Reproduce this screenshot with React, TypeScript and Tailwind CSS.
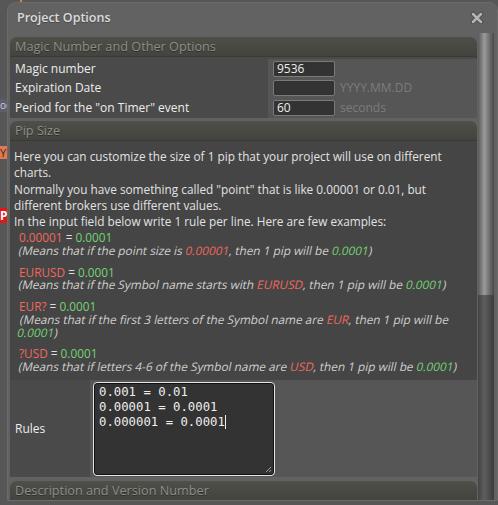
const R = ({ children }: { children: React.ReactNode }) => (
  <span className="text-[#f0685e]">{children}</span>
);
const G = ({ children }: { children: React.ReactNode }) => (
  <span className="text-[#74d474]">{children}</span>
);

const SectionHeader = ({ title }: { title: string }) => (
  <div className="h-[20px] rounded-t-[6px] bg-gradient-to-b from-[#4f4f49] to-[#44443e] border-b border-[#3a3a35] px-[5px] flex items-center text-[12.7px] text-[#8e8e89] [text-shadow:0_1px_0_#2f2f2b]">
    {title}
  </div>
);

const FieldRow = ({
  label,
  value,
  hint,
}: {
  label: string;
  value: string;
  hint?: string;
}) => (
  <div className="flex h-[19.5px]">
    <div className="w-[258px] bg-[#4a4a4a] px-[5px] flex items-center text-[12px] text-[#ececec]">
      {label}
    </div>
    <div className="flex-1 bg-[#565656] flex items-center pl-[5px] gap-[5px]">
      <div className="w-[62px] h-[16px] bg-[#333333] border border-[#7a7a7a] rounded-[2px] px-[3px] flex items-center text-[12px] text-[#eeeeee] leading-none">
        {value}
      </div>
      {hint && <span className="text-[12px] text-[#7c7c7c]">{hint}</span>}
    </div>
  </div>
);

// the app slants the regular face, so the notes keep regular widths
const Example = ({
  rule,
  desc,
  first,
}: {
  rule: React.ReactNode;
  desc: React.ReactNode;
  first?: boolean;
}) => (
  <div className={`pl-[5px] leading-[12.5px] ${first ? "mt-[2px]" : "mt-[9.5px]"}`}>
    <div className="text-[#dddddd]">{rule}</div>
    <div className="text-[#cfcfcf] -skew-x-12">{desc}</div>
  </div>
);

export default function App() {
  return (
    <div
      className="relative w-[498px] h-[505px] overflow-hidden bg-[#575757]"
      style={{ fontFamily: '"Open Sans", "Liberation Sans", sans-serif' }}
    >
      {/* bits of the window behind the dialog */}
      <div className="absolute left-[20px] top-0 w-[2px] h-[3px] bg-[#e0803a]" />
      <div className="absolute left-0 top-[99px] w-[7px] h-[13px] bg-[#5d5d6e] text-[10px] leading-[13px] text-[#cfcfd8] overflow-hidden">
        oc
      </div>
      <div className="absolute left-0 top-[146px] w-[7px] h-[13px] bg-[#e07850] text-[11px] leading-[13px] text-[#3a2a20] overflow-hidden">
        Y
      </div>
      <div className="absolute left-0 top-[208px] w-[7px] h-[15px] bg-[#e01818] text-[12px] font-bold leading-[15px] text-white overflow-hidden">
        P
      </div>

      <div className="absolute left-[7px] top-[2px] w-[491px] h-[499px] bg-[#626262] border border-[#6b6b6b] rounded-t-[9px] flex flex-col overflow-hidden">
        <div className="h-[30px] shrink-0 flex items-center justify-between pl-[9px] pr-[13px]">
          <span className="text-[12.5px] font-semibold text-[#dcdcdc] [text-shadow:0_1px_0_#4a4a4a]">
            Project Options
          </span>
          <svg width="14" height="14" viewBox="0 0 14 14">
            <path
              d="M3 3 L11 11 M11 3 L3 11"
              stroke="#4d4d4d"
              strokeWidth="4.5"
              strokeLinecap="round"
            />
            <path
              d="M3 3 L11 11 M11 3 L3 11"
              stroke="#b4b4b4"
              strokeWidth="2.5"
              strokeLinecap="round"
            />
          </svg>
        </div>

        <div className="flex flex-1 min-h-0">
          <div className="w-[467px] ml-[2px] pt-[4px] flex flex-col gap-[3.5px] overflow-hidden">
            <div className="shrink-0 rounded-t-[6px] overflow-hidden">
              <SectionHeader title="Magic Number and Other Options" />
              <div className="pt-[2px] bg-[#4a4a4a]">
                <FieldRow label="Magic number" value="9536" />
                <FieldRow label="Expiration Date" value="" hint="YYYY.MM.DD" />
                <FieldRow
                  label={'Period for the "on Timer" event'}
                  value="60"
                  hint="seconds"
                />
              </div>
            </div>

            <div className="shrink-0 rounded-t-[6px] overflow-hidden">
              <SectionHeader title="Pip Size" />
              <div className="bg-[#454545] pt-[7px] pb-[8px] px-[4px] text-[11.8px] text-[#e2e2e2]">
                <div className="leading-[16.25px]">
                  Here you can customize the size of 1 pip that your project will use on
                  different charts.
                  <br />
                  Normally you have something called "point" that is like 0.00001 or 0.01,
                  but different brokers use different values.
                  <br />
                  In the input field below write 1 rule per line. Here are few examples:
                </div>
                <Example
                  first
                  rule={
                    <>
                      <R>0.00001</R> = <G>0.0001</G>
                    </>
                  }
                  desc={
                    <>
                      (Means that if the point size is <R>0.00001</R>, then 1 pip will be{" "}
                      <G>0.0001</G>)
                    </>
                  }
                />
                <Example
                  rule={
                    <>
                      <R>EURUSD</R> = <G>0.0001</G>
                    </>
                  }
                  desc={
                    <>
                      (Means that if the Symbol name starts with <R>EURUSD</R>, then 1 pip
                      will be <G>0.0001</G>)
                    </>
                  }
                />
                <Example
                  rule={
                    <>
                      <R>EUR?</R> = <G>0.0001</G>
                    </>
                  }
                  desc={
                    <>
                      (Means that if the first 3 letters of the Symbol name are <R>EUR</R>,
                      then 1 pip will be <G>0.0001</G>)
                    </>
                  }
                />
                <Example
                  rule={
                    <>
                      <R>?USD</R> = <G>0.0001</G>
                    </>
                  }
                  desc={
                    <>
                      (Means that if letters 4-6 of the Symbol name are <R>USD</R>, then 1 pip
                      will be <G>0.0001</G>)
                    </>
                  }
                />
              </div>
              <div className="flex h-[97px]">
                <div className="w-[80px] bg-[#4a4a4a] px-[5px] flex items-center text-[12px] text-[#ececec]">
                  Rules
                </div>
                <div className="flex-1 bg-[#565656] pl-[3px] pt-[2px]">
                  <div
                    className="relative w-[182px] h-[94px] bg-[#333333] border border-[#e6e6e6] rounded-[4px] shadow-[inset_0_0_0_1px_#111111] pl-[5px] pt-[2px] text-[12.3px] leading-[15px] text-[#eeeeee] whitespace-pre"
                    style={{ fontFamily: '"DejaVu Sans Mono", monospace' }}
                  >
                    {"0.001 = 0.01\n0.00001 = 0.0001\n0.000001 = 0.0001"}
                    <span className="inline-block w-px h-[14px] bg-[#eeeeee] align-[-3px]" />
                    <svg
                      className="absolute right-[2px] bottom-[2px]"
                      width="7"
                      height="7"
                      viewBox="0 0 7 7"
                    >
                      <path d="M6 1 L1 6 M6 4 L4 6" stroke="#9a9a9a" strokeWidth="1" />
                    </svg>
                  </div>
                </div>
              </div>
            </div>

            <div className="shrink-0 rounded-t-[6px] overflow-hidden">
              <SectionHeader title="Description and Version Number" />
            </div>
          </div>

          <div className="ml-[1px] w-[16px] flex flex-col">
            <div className="h-[262px] bg-gradient-to-r from-[#5a5a5a] via-[#9a9a9a] via-40% to-[#4a4a4a]" />
            <div className="flex-1 bg-gradient-to-r from-[#444444] via-[#5e5e5e] via-40% to-[#3c3c3c]" />
          </div>
        </div>
      </div>
    </div>
  );
}
